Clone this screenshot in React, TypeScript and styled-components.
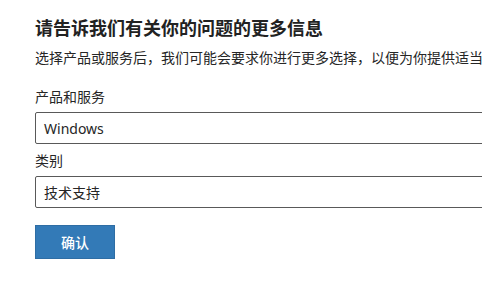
import React from "react";
import styled, { createGlobalStyle } from "styled-components";

const Global = createGlobalStyle`
  html, body {
    margin: 0;
    padding: 0;
    background: #fff;
    overflow: hidden;
  }
  body {
    font-family: "Noto Sans", "Noto Sans CJK SC", sans-serif;
    color: #262626;
  }
`;

const Page = styled.div`
  width: 482px;
  height: 301px;
  overflow: hidden;
`;

const Form = styled.form`
  width: 640px;
  padding: 16px 0 0 35px;
  display: flex;
  flex-direction: column;
`;

const Title = styled.h2`
  margin: 0;
  font-size: 18px;
  line-height: 24px;
  font-weight: 700;
  color: #222;
`;

const Intro = styled.p`
  margin: 8px 0 0;
  font-size: 14px;
  line-height: 20px;
  white-space: nowrap;
  color: #262626;
`;

const Field = styled.div`
  display: flex;
  flex-direction: column;
  margin-top: ${(p: { $top: number }) => p.$top}px;
`;

const Label = styled.label`
  font-size: 14px;
  line-height: 20px;
  color: #262626;
`;

const Select = styled.div`
  margin-top: 5px;
  height: 32px;
  box-sizing: border-box;
  border: 1px solid #595959;
  border-radius: 2px;
  padding: 0 8px;
  display: flex;
  align-items: center;
  font-size: 14px;
  color: #262626;
`;

const Button = styled.button`
  margin-top: 17px;
  width: 80px;
  height: 34px;
  background: #337ab7;
  border: 1px solid #2e6da4;
  color: #fff;
  font-family: "Noto Sans CJK SC", sans-serif;
  font-size: 14px;
  font-weight: 500;
  padding: 0;
  cursor: pointer;
`;

export default function App() {
  return (
    <Page>
      <Global />
      <Form onSubmit={(e) => e.preventDefault()}>
        <Title>请告诉我们有关你的问题的更多信息</Title>
        <Intro>选择产品或服务后，我们可能会要求你进行更多选择，以便为你提供适当的帮助。</Intro>
        <Field $top={19}>
          <Label>产品和服务</Label>
          <Select>Windows</Select>
        </Field>
        <Field $top={7}>
          <Label>类别</Label>
          <Select>技术支持</Select>
        </Field>
        <div>
          <Button type="submit">确认</Button>
        </div>
      </Form>
    </Page>
  );
}
